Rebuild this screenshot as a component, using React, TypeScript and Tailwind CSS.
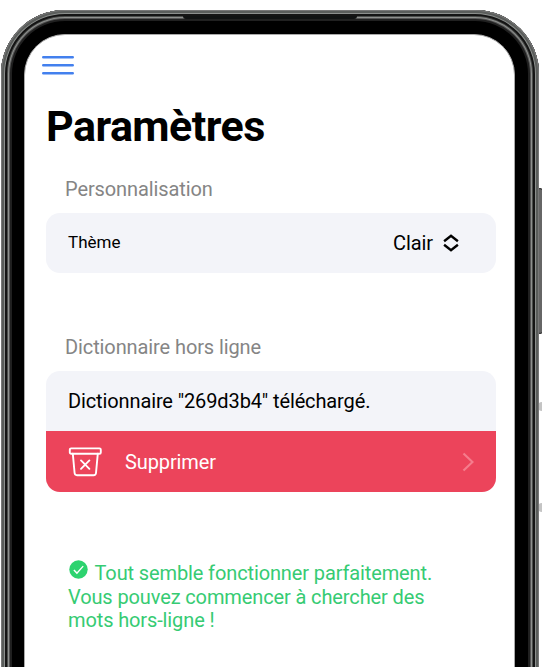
import React from "react";

function Menu() {
  return (
    <svg className="block h-[22px] w-8" viewBox="0 0 32 22" fill="none" stroke="#4380ee" strokeWidth="2.6" strokeLinecap="round">
      <path d="M1.3 3.2h29.4M1.3 11.2h29.4M1.3 19.2h29.4" />
    </svg>
  );
}

function Updown() {
  return (
    <svg className="ml-[10px] h-[18px] w-4" viewBox="0 0 16 18" fill="none" stroke="#000" strokeWidth="2.4">
      <path d="M1.1 7.2 8 1.8l6.9 5.4M1.1 10.8 8 16.2l6.9-5.4" />
    </svg>
  );
}

function Bin() {
  return (
    <svg className="h-[30px] w-[34px]" viewBox="0 0 34 30" fill="none" stroke="#fff" strokeWidth="1.9" strokeLinecap="round" strokeLinejoin="round">
      <rect x="1.8" y="1.4" width="31" height="5.3" rx="1.3" />
      <path d="m4.8 6.7 1.8 19.3a2.4 2.4 0 0 0 2.4 2.2h16.6a2.4 2.4 0 0 0 2.4-2.2L29.8 6.7M13 13.4l8.4 8.4M21.4 13.4l-8.4 8.4" />
    </svg>
  );
}

export default function App() {
  return (
    <div className="relative h-[667px] w-[542px] overflow-hidden bg-white pt-[10px] pl-px font-['Roboto',sans-serif] text-black">
      <div className="absolute top-[188px] left-[536px] h-[146px] w-[8px] rounded-sm border border-[#222] bg-[#666]" />
      <div className="absolute top-[334px] left-[538px] h-[333px] w-px bg-[#777]" />
      <div className="absolute top-[402px] left-[538px] h-[9px] w-[8px] rounded-full bg-[#c4c4c4]" />
      <div className="absolute top-[503px] left-[538px] h-[9px] w-[8px] rounded-full bg-[#c4c4c4]" />
      <div className="relative h-[760px] w-[537.5px] rounded-t-[64px] bg-black pt-[24px] pr-[23.5px] pl-[22.5px] shadow-[inset_0_0_0_1px_#777,inset_0_0_0_3px_#5a5d5b,inset_0_0_0_4px_#8c8f8d,inset_0_0_0_6px_#141414,inset_0_0_0_7px_#4c4e4c,inset_0_0_0_8px_#8e908e,inset_0_0_0_9px_#555,inset_0_0_0_11px_#202020]">
        <div className="absolute top-[6px] left-[182px] h-[3px] w-[174px] rounded-b-sm bg-[#101212]" />
        <main className="h-[740px] rounded-t-[41px] border border-[#aaa] bg-white pt-[19px] pr-[18px] pl-[21.5px]">
          <div className="-ml-[4px]"><Menu /></div>
          <h1 className="mt-[22px] text-[43px] leading-[56px] font-bold tracking-[-0.55px]">Paramètres</h1>
          <h2 className="mt-[23px] ml-[19px] text-[20px] leading-6 tracking-[-0.1px] text-[#858585]">Personnalisation</h2>
          <section className="mt-3 flex h-[60px] items-center rounded-[14px] bg-[#f3f4f9] pr-[37px] pl-[22px]">
            <span className="text-[17px]">Thème</span>
            <span className="ml-auto text-[20px] tracking-[-0.1px]">Clair</span>
            <Updown />
          </section>
          <h2 className="mt-[62px] ml-[19px] text-[20px] leading-6 tracking-[-0.1px] text-[#858585]">Dictionnaire hors ligne</h2>
          <section className="mt-3 overflow-hidden rounded-[14px] bg-[#f3f4f9] text-[20px] tracking-[-0.12px]">
            <div className="flex h-[60px] items-center pl-[22px]">Dictionnaire "269d3b4" téléchargé.</div>
            <button className="flex h-[60.5px] w-full items-center bg-[#ec445b] pt-px pr-[22px] pl-[22px] tracking-[-0.12px] text-white">
              <Bin />
              <span className="ml-[23px]">Supprimer</span>
              <svg className="ml-auto h-5 w-3" viewBox="0 0 12 20" fill="none" stroke="#f57c8c" strokeWidth="2.2"><path d="m1.5 1.5 9 8.5-9 8.5" /></svg>
            </button>
          </section>
          <p className="mt-[70.5px] ml-[22px] text-[20px] leading-[23.3px] tracking-[-0.12px] text-[#36cb73]">
            <svg className="relative -top-[4px] left-[1px] mr-[7.5px] mb-[3px] inline-block h-[19px] w-[19px]" viewBox="0 0 19 19"><circle cx="9.5" cy="9.5" r="9.2" fill="#2dd36f" /><path d="m4.9 10 3 3.1 6.3-7" fill="none" stroke="#fff" strokeWidth="1.4" /></svg>
            Tout semble fonctionner parfaitement.<br />Vous pouvez commencer à chercher des<br />mots hors-ligne !
          </p>
        </main>
      </div>
    </div>
  );
}
